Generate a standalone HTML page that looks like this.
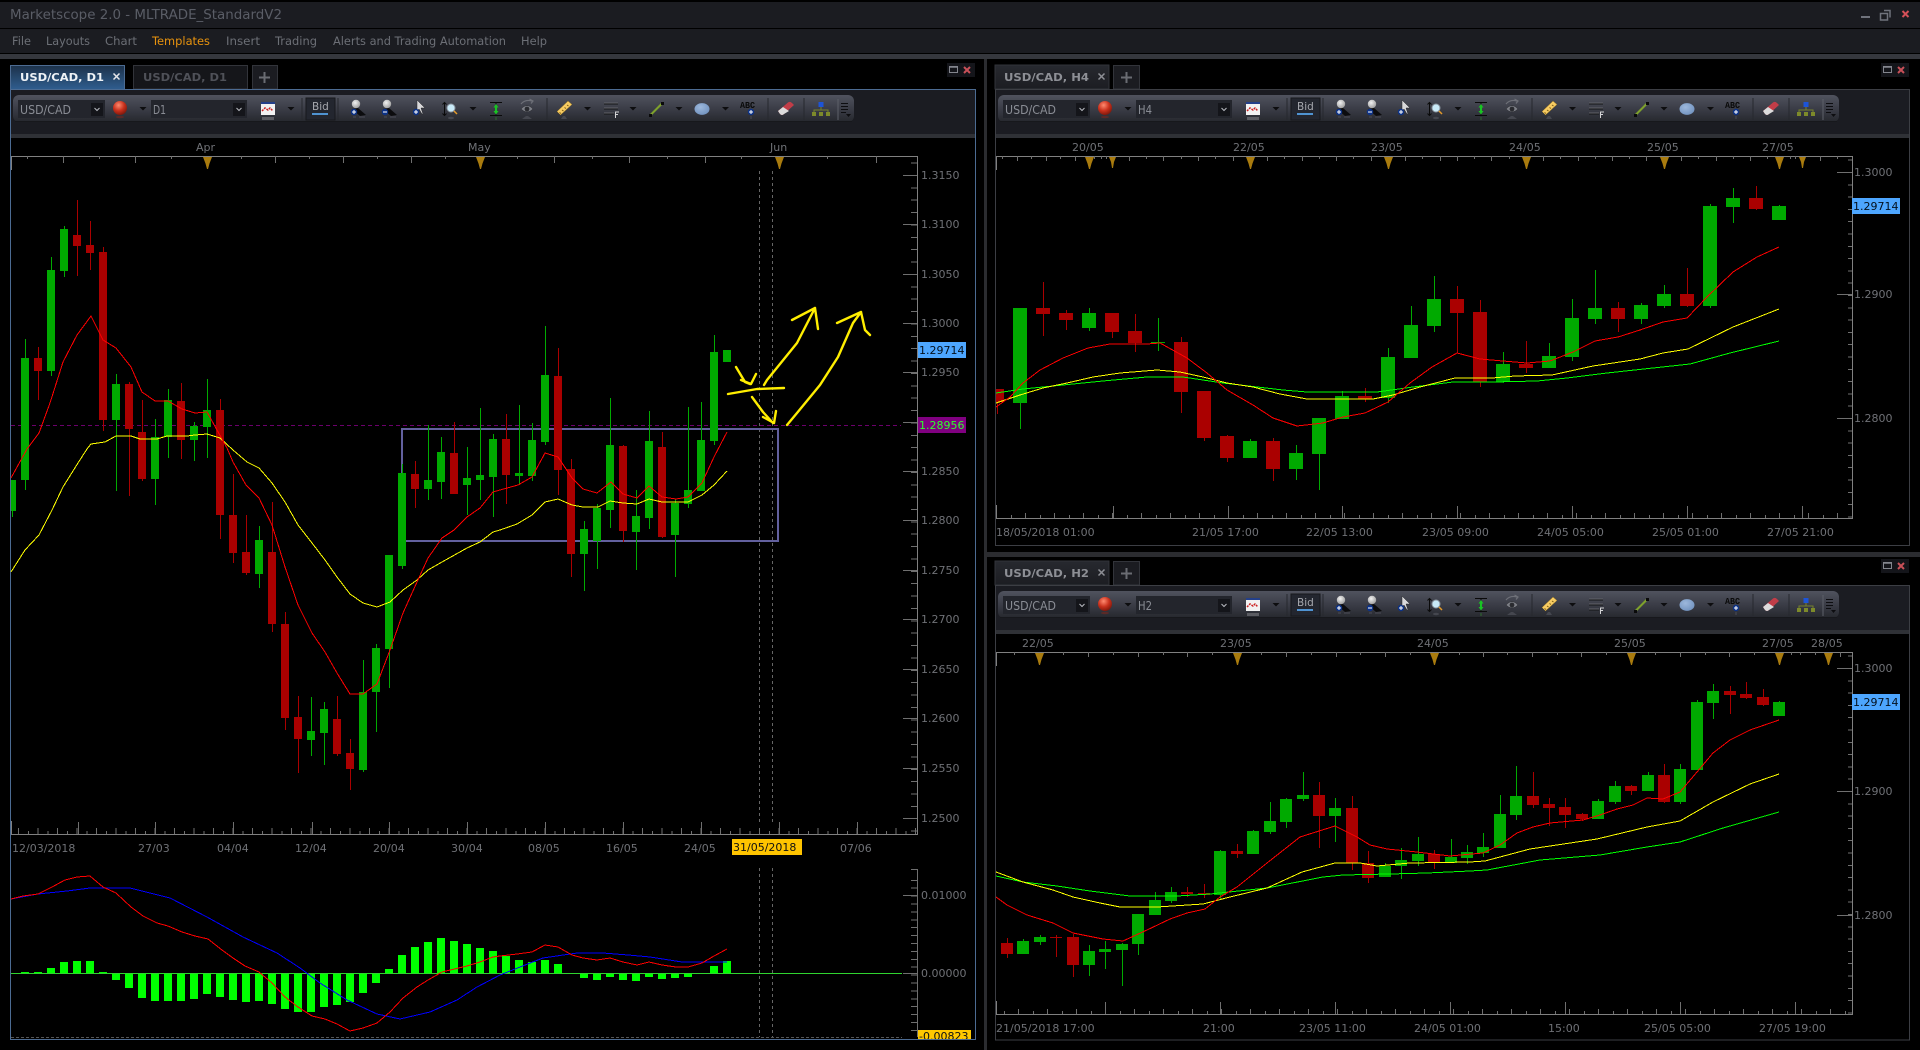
<!DOCTYPE html>
<html lang="en"><head><meta charset="utf-8"><title>Marketscope 2.0 - MLTRADE_StandardV2</title>
<style>
html,body{margin:0;padding:0;background:#000;width:1920px;height:1050px;overflow:hidden}
svg{display:block}
text{font-family:"DejaVu Sans","Liberation Sans",sans-serif;font-size:11px;fill:#6f7176}
.m{font-size:11.5px;fill:#6c6f76}
.tb{font-weight:bold;font-size:11px}
.sel{font-size:12.5px;fill:#8a8d95}
.abc{fill:#0a0a0a;font-size:9px;font-weight:bold;font-family:"Liberation Mono",monospace}
.crisp path,.crisp polyline,.crisp rect{shape-rendering:crispEdges}
.ma{fill:none;stroke-width:1;shape-rendering:crispEdges}
.gb{fill:none;stroke:#00aa00}.rb{fill:none;stroke:#aa0000}
.ax{fill:none;stroke:#808080;stroke-width:1;shape-rendering:crispEdges}
.tk{fill:none;stroke:#6f6f6f;shape-rendering:crispEdges}
.an{fill:none;stroke:#ffee00;stroke-width:2.4;stroke-linecap:round;stroke-linejoin:round}
</style></head>
<body>
<svg width="1920" height="1050" viewBox="0 0 1920 1050" xmlns="http://www.w3.org/2000/svg">
<defs>
<linearGradient id="tbg" x1="0" y1="0" x2="0" y2="1"><stop offset="0" stop-color="#50535e"/><stop offset=".5" stop-color="#3b3d47"/><stop offset="1" stop-color="#26282e"/></linearGradient>
<linearGradient id="tabA" x1="0" y1="0" x2="0" y2="1"><stop offset="0" stop-color="#1c3048"/><stop offset="1" stop-color="#2f5d8e"/></linearGradient>
<linearGradient id="tabI" x1="0" y1="0" x2="0" y2="1"><stop offset="0" stop-color="#27292f"/><stop offset="1" stop-color="#1c1d22"/></linearGradient>
<radialGradient id="ball" cx=".4" cy=".3" r=".8"><stop offset="0" stop-color="#ff8a70"/><stop offset=".5" stop-color="#c8301c"/><stop offset="1" stop-color="#6a1208"/></radialGradient>
<radialGradient id="gball" cx=".4" cy=".35" r=".8"><stop offset="0" stop-color="#f2f2f2"/><stop offset="1" stop-color="#8e8e8e"/></radialGradient>
<radialGradient id="bball" cx=".4" cy=".35" r=".8"><stop offset="0" stop-color="#9db8dc"/><stop offset="1" stop-color="#6b8dbb"/></radialGradient>
<path id="tri" d="M-4.5 0H4.5L2 6.5L.5 12H-.5L-2 6.5Z" fill="#a97b0e"/>
<path id="dn" d="M-3.5 0H3.5L0 3.5Z" fill="#0d0d0f"/>
<g id="toolbar">
<rect x="13" y="95" width="841" height="27" rx="6" fill="url(#tbg)"/>
<path d="M15 121.500H852" stroke="#17181c" stroke-width="1"/>
<rect x="18" y="100" width="87" height="18" fill="#23252c"/>
<rect x="91" y="103" width="12" height="13" fill="#14151a"/>
<path d="M94.500 108l2.500 2.500 2.500-2.500" fill="none" stroke="#b8bac0"/>
<circle cx="120" cy="108" r="7" fill="url(#ball)"/>
<ellipse cx="120" cy="117" rx="4" ry="1.300" fill="#5a2a28"/>
<use href="#dn" x="143" y="107"/>
<rect x="151" y="100" width="96" height="18" fill="#23252c"/>
<rect x="233" y="103" width="12" height="13" fill="#14151a"/>
<path d="M236.500 108l2.500 2.500 2.500-2.500" fill="none" stroke="#b8bac0"/>
<rect x="261" y="102" width="14" height="13" fill="#f2f2f2"/><rect x="261" y="102" width="14" height="2" fill="#24408a"/>
<path d="M262 111l3-3 3 2 2-2 3 3" fill="none" stroke="#c22" stroke-width="1.500" stroke-dasharray="2 1"/>
<rect x="262" y="117" width="12" height="3" fill="#5b5c62"/>
<use href="#dn" x="291" y="107"/>
<path d="M302 98V120M338 98V120M547 98V120M768 98V120M804 98V120" stroke="#26282e"/>
<rect x="306" y="98" width="29" height="22" fill="#23262f" stroke="#17181c"/>
<rect x="312" y="113" width="16" height="2" fill="#4f93d2"/>
<circle cx="356" cy="104" r="4.200" fill="url(#gball)"/><path d="M352 109L358 108L366 115L360 116Z" fill="#0c0c0e"/>
<circle cx="354" cy="112" r="3.200" fill="#0c3287"/><path d="M352 112h4M354 110v4" stroke="#fff"/>
<path d="M353 117h3M359 117h6" stroke="#4b4c55"/>
<circle cx="387" cy="104" r="4.200" fill="url(#gball)"/><path d="M383 109L389 108L397 115L391 116Z" fill="#0c0c0e"/>
<circle cx="385" cy="112" r="3.200" fill="#0c3287"/><path d="M383 112h4" stroke="#fff"/>
<path d="M384 117h3M390 117h6" stroke="#4b4c55"/>
<path d="M417 100V111L419 109L422 114H423L421 108H425Z" fill="#d8d8da" stroke="#26272c" stroke-width=".5"/>
<circle cx="416" cy="112" r="3.200" fill="#0c3287"/><path d="M414 112h4M416 110v4" stroke="#fff"/>
<path d="M444.500 103V115M442.500 104.500L444.500 102.500L446.500 104.500M442.500 113.500L444.500 115.500L446.500 113.500" fill="none" stroke="#0a0a0a"/>
<circle cx="451" cy="108" r="4" fill="#c9eaf8" stroke="#8c97a2"/><path d="M454 111L457 114" stroke="#e49a2a" stroke-width="1.500"/>
<ellipse cx="451" cy="118" rx="3" ry="1.200" fill="#45474f"/>
<use href="#dn" x="473" y="107"/>
<path d="M490 102.500H502M490 115.500H502M496 103V115" stroke="#0a0a0a"/>
<path d="M496 104L498.500 107.500H497V111H498.500L496 114.500L493.500 111H495V107.500H493.500Z" fill="#19c423"/>
<path d="M496 117v3" stroke="#2d6b2d"/>
<path d="M521 109Q527 102 533 109Q527 115 521 109Z" fill="#7e8088" stroke="#26272c" stroke-width=".5"/><circle cx="527" cy="109" r="2.400" fill="#2a2b30"/>
<path d="M521 104Q525 99 532 101M529.500 99L533 101L531 103.500" fill="none" stroke="#6e7078" stroke-width="1.200"/>
<path d="M522 119L526 116H528L532 119Z" fill="#45474f"/>
<path d="M557 111.500L568 101L572 104.500L560.500 115Z" fill="#f7cb62" stroke="#8c6e22" stroke-width=".5"/>
<path d="M559.500 112.500l1.500 1M562 110l1.500 1M564.500 107.500l1.500 1M567 105l1.500 1" stroke="#7a5c12"/>
<path d="M561 119L563 116H565L567 119Z" fill="#45474f"/>
<use href="#dn" x="587.500" y="107"/>
<path d="M604 103.500H618M604 108.500H618M604 113.500H614" stroke="#141416" stroke-width="2"/>
<path d="M604 103H618M604 108H618M604 113H614" stroke="#7c7e86" stroke-width=".8"/>
<path d="M615.500 118V112H619M615.500 114.500H618" stroke="#d4d4d6" fill="none"/>
<use href="#dn" x="633" y="107"/>
<path d="M650.500 115L662 103.500" stroke="#7ea12c" stroke-width="2"/><rect x="649" y="114" width="3" height="3" fill="#0a0a0a"/><rect x="661" y="102" width="3" height="3" fill="#0a0a0a"/>
<use href="#dn" x="679" y="107"/>
<ellipse cx="702" cy="109" rx="7.500" ry="5.900" fill="url(#bball)"/>
<use href="#dn" x="725.500" y="107"/>
<circle cx="751" cy="112" r="3.200" fill="#0c3287"/><path d="M749 112h4M751 110v4" stroke="#fff"/>
<path d="M751 116v3" stroke="#4b4c55"/>
<path d="M778 111L788 102.500Q790 101 792 103L794 105L784 114Q782 116 780 114Z" fill="#c13d48"/><path d="M778 111L783 107L789 111L784 114Q782 116 780 114Z" fill="#dcdcdc"/>
<rect x="818.500" y="102" width="5" height="5" fill="#1d54d8"/>
<path d="M821 107V110M814 112V110H828V112" fill="none" stroke="#77822c"/>
<rect x="812" y="112" width="4" height="4" fill="#7d8a2a"/><rect x="819" y="112" width="4" height="4" fill="#7d8a2a"/><rect x="826" y="112" width="4" height="4" fill="#7d8a2a"/>
<path d="M838 99V120" stroke="#5d6069"/>
<path d="M841 103.500H848M841 106.500H848M841 109.500H848M841 112.500H846" stroke="#0d0d10"/>
<path d="M846 114H851L848.500 117Z" fill="#0d0d10"/>
</g>
<g id="wc">
<rect x="-7" y="-7" width="28" height="14" fill="#14151a"/>
<rect x="-4.500" y="-3.500" width="8" height="6" fill="none" stroke="#84868e"/><path d="M-4.500 -3H4" stroke="#84868e" stroke-width="1.500"/>
<path d="M10 -3L16 3M16 -3L10 3" stroke="#c85058" stroke-width="2"/>
</g>
</defs>

<rect width="1920" height="1050" fill="#000"/>
<rect y="2" width="1920" height="26" fill="#1b1c21"/>
<rect y="29" width="1920" height="24" fill="#1b1c21"/>
<rect y="54" width="1920" height="5" fill="#35373d"/>
<text x="10" y="19" class="m" style="font-size:13px;fill:#5a5d66" textLength="272" lengthAdjust="spacingAndGlyphs">Marketscope 2.0 - MLTRADE_StandardV2</text>
<text x="12" y="45" class="m" textLength="19" lengthAdjust="spacingAndGlyphs">File</text>
<text x="46" y="45" class="m" textLength="44" lengthAdjust="spacingAndGlyphs">Layouts</text>
<text x="105" y="45" class="m" textLength="32" lengthAdjust="spacingAndGlyphs">Chart</text>
<text x="152" y="45" class="m" style="fill:#e8930e" textLength="58" lengthAdjust="spacingAndGlyphs">Templates</text>
<text x="226" y="45" class="m" textLength="34" lengthAdjust="spacingAndGlyphs">Insert</text>
<text x="275" y="45" class="m" textLength="42" lengthAdjust="spacingAndGlyphs">Trading</text>
<text x="333" y="45" class="m" textLength="173" lengthAdjust="spacingAndGlyphs">Alerts and Trading Automation</text>
<text x="521" y="45" class="m" textLength="26" lengthAdjust="spacingAndGlyphs">Help</text>
<path d="M1861 16h9v2h-9z" fill="#70737c"/>
<path d="M1884 10.500h6v7M1880.500 13.500h7v6.500h-7z" fill="none" stroke="#70737c" stroke-width="1.500"/>
<path d="M1902.500 11L1908.500 17M1908.500 11L1902.500 17" stroke="#d55058" stroke-width="2"/>
<rect x="984" y="59" width="3" height="991" fill="#2b2c30"/>
<rect x="987" y="552" width="933" height="5" fill="#2b2c30"/>

<!-- LEFT panel frame and tabs -->
<rect x="10" y="65" width="115" height="24" fill="url(#tabA)"/><path d="M10.500 89V65.500H124.500V89" fill="none" stroke="#4c6b92"/>
<text x="20" y="81" class="tb" style="fill:#eef2f6" textLength="84" lengthAdjust="spacingAndGlyphs">USD/CAD, D1</text>
<path d="M113.500 73.500L119.500 79.500M119.500 73.500L113.500 79.500" stroke="#e6e6ea" stroke-width="1.500"/>
<rect x="133.500" y="65.500" width="114" height="23.500" fill="#15161a" stroke="#32343a"/>
<text x="143" y="81" class="tb" style="fill:#4f5158" textLength="84" lengthAdjust="spacingAndGlyphs">USD/CAD, D1</text>
<rect x="252.500" y="65.500" width="25" height="23.500" fill="#1b1c21" stroke="#32343a"/>
<path d="M259 77.500h11M264.500 72v11" stroke="#6a6c72" stroke-width="2"/>
<rect x="10.500" y="89.500" width="965" height="950" fill="#000" stroke="#4c6b92"/>
<rect x="11" y="90" width="964" height="44" fill="#1b1c22"/><rect x="11" y="134" width="964" height="4" fill="#2f3136"/>
<use href="#wc" x="954" y="70"/>
<use href="#toolbar"/>
<text x="20" y="114" class="sel" textLength="51" lengthAdjust="spacingAndGlyphs">USD/CAD</text>
<text x="153" y="114" class="sel" textLength="13" lengthAdjust="spacingAndGlyphs">D1</text>
<text x="312" y="110" style="fill:#a6a8ae;font-size:10.500px">Bid</text>
<text x="740" y="108" class="abc" textLength="15" lengthAdjust="spacingAndGlyphs">ABC</text>

<!-- RIGHT panel 2 -->
<rect x="995" y="65" width="114" height="24" fill="url(#tabI)" stroke="#32343a"/>
<text x="1004" y="81" class="tb" style="fill:#8d8f95" textLength="85" lengthAdjust="spacingAndGlyphs">USD/CAD, H4</text>
<path d="M1098.500 73.500L1104.500 79.500M1104.500 73.500L1098.500 79.500" stroke="#8d8f95" stroke-width="1.500"/>
<rect x="1113.500" y="65.500" width="26" height="23.500" fill="#1b1c21" stroke="#32343a"/>
<path d="M1121 77.500h11M1126.500 72v11" stroke="#6a6c72" stroke-width="2"/>
<rect x="995.500" y="89.500" width="914" height="456" fill="#000" stroke="#3c3e44"/>
<rect x="996" y="90" width="913" height="44" fill="#1b1c22"/><rect x="996" y="134" width="913" height="4" fill="#2f3136"/>
<use href="#wc" x="1888" y="70"/>
<use href="#toolbar" x="985"/>
<text x="1005" y="114" class="sel" textLength="51" lengthAdjust="spacingAndGlyphs">USD/CAD</text>
<text x="1138" y="114" class="sel" textLength="14" lengthAdjust="spacingAndGlyphs">H4</text>
<text x="1297" y="110" style="fill:#a6a8ae;font-size:10.500px">Bid</text>
<text x="1725" y="108" class="abc" textLength="15" lengthAdjust="spacingAndGlyphs">ABC</text>

<!-- RIGHT panel 3 -->
<rect x="995" y="561" width="114" height="24" fill="url(#tabI)" stroke="#32343a"/>
<text x="1004" y="577" class="tb" style="fill:#8d8f95" textLength="85" lengthAdjust="spacingAndGlyphs">USD/CAD, H2</text>
<path d="M1098.500 569.500L1104.500 575.500M1104.500 569.500L1098.500 575.500" stroke="#8d8f95" stroke-width="1.500"/>
<rect x="1113.500" y="561.500" width="26" height="23.500" fill="#1b1c21" stroke="#32343a"/>
<path d="M1121 573.500h11M1126.500 568v11" stroke="#6a6c72" stroke-width="2"/>
<rect x="995.500" y="585.500" width="914" height="454.500" fill="#000" stroke="#3c3e44"/>
<rect x="996" y="586" width="913" height="44" fill="#1b1c22"/><rect x="996" y="630" width="913" height="4" fill="#2f3136"/>
<use href="#wc" x="1888" y="566"/>
<use href="#toolbar" x="985" y="496"/>
<text x="1005" y="610" class="sel" textLength="51" lengthAdjust="spacingAndGlyphs">USD/CAD</text>
<text x="1138" y="610" class="sel" textLength="14" lengthAdjust="spacingAndGlyphs">H2</text>
<text x="1297" y="606" style="fill:#a6a8ae;font-size:10.500px">Bid</text>
<text x="1725" y="604" class="abc" textLength="15" lengthAdjust="spacingAndGlyphs">ABC</text>

<!-- MAIN CHART -->
<g>
<path class="ax" d="M11.500 170V156.500H917.500V834.500H11.500V821"/>
<path class="tk" stroke-width="1" d="M27.500 156v3M63.500 156v7M99.500 156v3M135.500 156v7M171.500 156v3M241.500 156v3M275.500 156v7M309.500 156v3M343.500 156v7M377.500 156v3M411.500 156v7M445.500 156v3M517.500 156v3M554.500 156v7M592.500 156v3M629.500 156v7M667.500 156v3M705.500 156v7M741.500 156v3M827.500 156v3M876.500 156v7"/>
<use href="#tri" x="207.500" y="157"/><use href="#tri" x="480.500" y="157"/><use href="#tri" x="779.500" y="157"/>
<text x="196" y="151">Apr</text><text x="468" y="151">May</text><text x="770" y="151">Jun</text>
<path class="tk" stroke-width="1" d="M78.500 822V834M155.500 822V834M233.500 822V834M312.500 822V834M389.500 822V834M467.500 822V834M545.500 822V834M623.500 822V834M701.500 822V834M779.500 822V834M857.500 822V834"/>
<path class="tk" stroke-width="6" stroke-dasharray="1 18.500" d="M18 831H917"/>
<path class="tk" stroke-width="3" stroke-dasharray="1 18.500" d="M28 832.500H917"/>
<path class="tk" stroke-width="6" stroke-dasharray="1 11.370" d="M914 162.630V834"/>
<path class="tk" stroke-width="1" d="M903 175.500H917M903 224.500H917M903 274.500H917M903 323.500H917M903 372.500H917M903 422.500H917M903 471.500H917M903 520.500H917M903 570.500H917M903 619.500H917M903 669.500H917M903 718.500H917M903 768.500H917M903 818.500H917"/>
<text x="921" y="179">1.3150</text><text x="921" y="228">1.3100</text><text x="921" y="278">1.3050</text><text x="921" y="327">1.3000</text><text x="921" y="376">1.2950</text><text x="921" y="475">1.2850</text><text x="921" y="524">1.2800</text><text x="921" y="574">1.2750</text><text x="921" y="623">1.2700</text><text x="921" y="673">1.2650</text><text x="921" y="722">1.2600</text><text x="921" y="772">1.2550</text><text x="921" y="822">1.2500</text>
<path d="M11 425.500H901" stroke="#6c006c" stroke-dasharray="4 3" shape-rendering="crispEdges"/>
<path d="M759.500 171V822M772.500 171V822M759.500 868V1037M772.500 868V1037" stroke="#666" stroke-dasharray="3 3" shape-rendering="crispEdges"/>
<rect x="402" y="429" width="376" height="112" fill="none" stroke="#62609e" stroke-width="2" shape-rendering="crispEdges"/>
<path class="gb" stroke-width="1" shape-rendering="crispEdges" d="M12.500 480V517M25.500 339V490M51.500 257V376M64.500 226V277M116.500 374V491M155.500 419V505M168.500 389V458M194.500 422V461M207.500 379V458M259.500 526V588M311.500 697V756M324.500 702V765M363.500 660V772M376.500 644V732M389.500 555V688M402.500 464V569M428.500 425V500M441.500 437V499M467.500 447V515M480.500 408V500M493.500 434V517M519.500 405V485M532.500 423V481M545.500 326V445M584.500 521V591M597.500 504V569M610.500 398V528M636.500 490V570M649.500 411V529M675.500 499V577M688.500 407V508M701.500 402V491M714.500 335V445"/>
<path class="rb" stroke-width="1" shape-rendering="crispEdges" d="M38.500 347V400M77.500 200V276M90.500 221V270M103.500 247V431M129.500 382V496M142.500 400V481M181.500 383V459M220.500 399V539M233.500 474V563M246.500 515V575M272.500 502V632M285.500 612V730M298.500 696V773M337.500 696V756M350.500 739V790M415.500 461V508M454.500 422V494M506.500 414V504M558.500 348V495M571.500 459V577M623.500 445V542M662.500 432V538"/>
<path class="gb" stroke-width="5" shape-rendering="crispEdges" d="M13.500 480V511"/>
<path class="gb" stroke-width="8" shape-rendering="crispEdges" d="M25 358V480M51 270V371M64 229V271M116 384V420M155 437V479M168 400V437M194 426V440M207 410V427M259 540V574M311 731V740M324 709V733M363 692V770M376 648V692M389 555V649M402 473V566M428 480V489M441 452V482M467 478V485M480 475V480M493 439V477M519 473V476M532 440V476M545 375V442M584 529V554M597 508V541M610 445V510M636 516V532M649 441V518M675 503V535M688 490V504M701 440V491M714 352V441M727 350V362"/>
<path class="rb" stroke-width="8" shape-rendering="crispEdges" d="M38 358V371M77 235V246M90 245V253M103 252V420M129 384V429M142 432V479M181 401V440M220 410V515M233 515V553M246 552V573M272 552V624M285 624V718M298 717V739M337 719V754M350 753V769M415 474V489M454 453V494M506 439V475M558 376V470M571 469V554M623 446V531M662 447V537"/>
<polyline class="ma" stroke="#ffff00" points="11,572 25,550 39,535 52,510 63,487 78,463 87,449 91,444 105,442 116,436 131,436 140,439 157,439 167,436 187,436 195,435 207,434 220,438 233,450 247,462 259,468 272,483 285,502 298,525 312,543 325,560 337,577 350,594 363,603 377,607 390,602 403,590 417,580 428,570 442,562 467,548 480,542 493,532 500,530 517,524 532,515 545,502 558,499 572,505 583,507 598,507 610,501 623,503 637,504 649,499 662,502 676,502 688,502 702,495 714,485 727,471"/>
<polyline class="ma" stroke="#ff0000" points="11,478 27,449 39,433 50,403 63,362 77,335 91,316 103,340 116,348 131,367 142,392 155,401 168,401 182,409 195,413 207,412 217,430 227,448 233,462 246,485 259,498 272,525 285,567 298,605 312,633 325,652 337,673 350,694 363,694 377,684 390,650 403,613 417,582 428,558 442,538 454,530 467,517 480,508 493,492 500,490 518,485 532,477 545,453 558,457 572,478 583,489 597,493 611,482 623,494 637,498 649,486 662,497 676,499 688,497 702,483 714,457 727,432"/>
<path class="an" d="M736 367L745 382L750 384M741 380L751 384L756 374"/>
<path class="an" d="M728 394L757 389L784 388" stroke-width="3"/>
<path class="an" d="M752 397L763 412L773 423M763 417L774 423L776 411"/>
<path class="an" d="M764 385L767 380L797 343L815 308M792 320L815 308L818 329"/>
<path class="an" d="M787 425L797 413L820 385L838 357L853 323L861 312M837 323L861 312L865 330L870 335"/>
<rect x="918" y="342" width="48" height="16" fill="#4da6ff"/><text x="919" y="354" style="fill:#04101c">1.29714</text>
<rect x="918" y="417" width="48" height="16" fill="#800080"/><text x="919" y="429" style="fill:#2cff2c">1.28956</text>
<text x="12" y="852">12/03/2018</text><text x="138" y="852">27/03</text><text x="217" y="852">04/04</text><text x="295" y="852">12/04</text><text x="373" y="852">20/04</text><text x="451" y="852">30/04</text><text x="528" y="852">08/05</text><text x="606" y="852">16/05</text><text x="684" y="852">24/05</text><text x="840" y="852">07/06</text>
<rect x="732" y="839" width="70" height="16" fill="#ffc400"/><text x="733" y="851" style="fill:#111">31/05/2018</text>
<path class="tk" stroke-width="1" d="M917.500 869V1037M903 895.500H917M903 973.500H917"/>
<path class="tk" stroke-width="1" d="M911 869.500h6"/>
<path class="tk" stroke-width="6" stroke-dasharray="1 6.900" d="M914 879.800V1037"/>
<text x="921" y="899">0.01000</text><text x="921" y="977">0.00000</text>
<path d="M11 1037.500H902" stroke="#555" stroke-dasharray="3 2" shape-rendering="crispEdges"/>
<path fill="none" stroke="#00ff00" stroke-width="8" shape-rendering="crispEdges" d="M25 972V974M38 972V974M51 968V974M64 962V974M77 961V974M90 961V974M103 972V974M116 973V980M129 973V988M142 973V998M155 973V1001M168 973V1001M181 973V1001M194 973V999M207 973V994M220 973V997M233 973V1000M246 973V1002M259 973V1001M272 973V1004M285 973V1009M298 973V1012M311 973V1012M324 973V1007M337 973V1005M350 973V1002M363 973V993M376 973V983M389 969V974M402 955V974M415 947V974M428 942V974M441 938V974M454 941V974M467 944V974M480 948V974M493 951V974M506 956V974M519 960V974M532 962V974M545 960V974M558 964V974M584 973V978M597 973V980M610 973V977M623 973V980M636 973V981M649 973V977M662 973V979M675 973V978M688 973V977M714 966V974M727 961V974"/>
<path d="M11 973.500H902" stroke="#2fd42f" shape-rendering="crispEdges"/>
<polyline class="ma" stroke="#0000ff" points="11,899 38,894 67,891 90,888 130,888 170,898 207,917 243,937 277,953 300,968 320,983 347,1000 377,1014 400,1019 430,1012 457,1000 477,987 500,975 520,967 543,958 577,953 603,953 628,955 650,957 682,962 727,962"/>
<polyline class="ma" stroke="#ff0000" points="11,899 23,896 38,894 52,887 65,880 77,877 90,876 103,887 116,893 131,907 143,916 157,923 168,926 182,932 195,936 208,939 222,950 233,958 245,966 259,972 272,983 285,997 298,1007 312,1016 325,1019 337,1024 350,1031 363,1028 377,1023 390,1012 403,998 417,987 428,980 442,972 467,966 480,962 493,957 500,956 517,954 532,952 545,945 558,947 572,955 583,958 597,960 610,958 623,962 637,965 649,962 662,965 676,967 688,967 702,963 714,956 727,949"/>
<svg x="918" y="1030" width="53" height="9" overflow="hidden"><rect width="53" height="9" fill="#ffc800"/><text x="1" y="10" style="fill:#111">-0.00823</text></svg>
</g>

<!-- PANEL 2 CHART -->
<g>
<path class="ax" d="M996.500 170V156.500H1852.500V518.500H996.500V505"/>
<path class="tk" stroke-width="1" d="M1002.500 156v3M1017.500 156v5M1031.500 156v3M1046.500 156v5M1060.500 156v3M1075.500 156v5M1094.500 156v3M1101.500 156v3M1106.500 156v3M1129.500 156v5M1146.500 156v3M1163.500 156v5M1181.500 156v3M1198.500 156v5M1215.500 156v3M1233.500 156v5M1267.500 156v5M1284.500 156v3M1302.500 156v5M1319.500 156v3M1336.500 156v5M1353.500 156v3M1371.500 156v5M1405.500 156v5M1422.500 156v3M1440.500 156v5M1457.500 156v5M1474.500 156v3M1491.500 156v5M1509.500 156v3M1543.500 156v5M1560.500 156v3M1578.500 156v5M1595.500 156v3M1612.500 156v5M1629.500 156v3M1646.500 156v5M1681.500 156v5M1698.500 156v3M1716.500 156v5M1733.500 156v3M1750.500 156v5M1767.500 156v3M1790.500 156v3M1795.500 156v3M1820.500 156v5M1837.500 156v3"/>
<use href="#tri" x="1089.500" y="157"/>
<path d="M1109 157H1116L1114 162L1113 168H1112L1111 162Z" fill="#a97b0e"/>
<use href="#tri" x="1250.500" y="157"/><use href="#tri" x="1388.500" y="157"/><use href="#tri" x="1526.500" y="157"/><use href="#tri" x="1664.500" y="157"/><use href="#tri" x="1779.500" y="157"/>
<path d="M1799 157H1806L1804 162L1803 168H1802L1801 162Z" fill="#a97b0e"/>
<text x="1072" y="151">20/05</text><text x="1233" y="151">22/05</text><text x="1371" y="151">23/05</text><text x="1509" y="151">24/05</text><text x="1647" y="151">25/05</text><text x="1762" y="151">27/05</text>
<path class="tk" stroke-width="1" d="M1113.500 506V518M1228.500 506V518M1342.500 506V518M1457.500 506V518M1572.500 506V518M1687.500 506V518M1802.500 506V518"/>
<path class="tk" stroke-width="5" stroke-dasharray="1 28" d="M1025 515.500H1852"/>
<path class="tk" stroke-width="3" stroke-dasharray="1 28" d="M1011 516.500H1852"/>
<path class="tk" stroke-width="4" stroke-dasharray="1 11.300" d="M1850 159.700V518"/>
<path class="tk" stroke-width="1" d="M1837 172.500H1852M1837 294.500H1852M1837 418.500H1852"/>
<text x="1854" y="176">1.3000</text><text x="1854" y="298">1.2900</text><text x="1854" y="422">1.2800</text>
<text x="996" y="536">18/05/2018 01:00</text><text x="1192" y="536">21/05 17:00</text><text x="1306" y="536">22/05 13:00</text><text x="1422" y="536">23/05 09:00</text><text x="1537" y="536">24/05 05:00</text><text x="1652" y="536">25/05 01:00</text><text x="1767" y="536">27/05 21:00</text>
<path class="gb" stroke-width="1" shape-rendering="crispEdges" d="M1020.500 308V429M1089.500 308V331M1158.500 318V351M1250.500 439V458M1296.500 445V480M1319.500 418V490M1342.500 391V419M1388.500 348V403M1411.500 306V358M1434.500 276V332M1503.500 352V383M1549.500 343V368M1572.500 299V361M1595.500 270V324M1641.500 303V324M1664.500 285V308M1710.500 204V308M1733.500 188V223M1779.500 205V220"/>
<path class="rb" stroke-width="1" shape-rendering="crispEdges" d="M997.500 402V414M1043.500 282V336M1066.500 310V330M1112.500 313V338M1135.500 314V352M1181.500 337V413M1204.500 391V441M1227.500 435V462M1273.500 438V481M1365.500 388V402M1457.500 286V353M1480.500 300V387M1526.500 341V373M1618.500 302V332M1687.500 268V307M1756.500 186V210"/>
<path class="rb" stroke-width="8" shape-rendering="crispEdges" d="M1000 389V402"/>
<path class="gb" stroke-width="14" shape-rendering="crispEdges" d="M1020 308V403M1089 313V328M1158 342V343M1250 441V458M1296 453V469M1319 418V454M1342 396V419M1388 357V398M1411 325V358M1434 299V326M1503 364V382M1549 356V368M1572 318V357M1595 308V319M1641 305V319M1664 294V306M1710 206V306M1733 198V207M1779 206V220"/>
<path class="rb" stroke-width="14" shape-rendering="crispEdges" d="M1043 308V314M1066 313V320M1112 313V332M1135 331V343M1181 342V392M1204 391V438M1227 436V458M1273 441V469M1365 396V399M1457 299V313M1480 312V382M1526 364V368M1618 308V319M1687 294V306M1756 198V209"/>
<polyline class="ma" stroke="#00ff00" points="996,393 1023,389 1063,385 1103,381 1147,377 1183,377 1223,383 1283,390 1307,392 1377,392 1413,387 1453,382 1492,382 1537,381 1567,378 1607,373 1653,368 1690,364 1730,353 1779,341"/>
<polyline class="ma" stroke="#ffff00" points="996,403 1020,395 1043,388 1067,383 1093,377 1120,373 1157,370 1180,372 1203,377 1227,383 1253,387 1280,394 1307,399 1373,399 1393,395 1420,387 1455,378 1492,378 1515,376 1552,375 1593,366 1640,359 1663,353 1688,349 1733,327 1779,309"/>
<polyline class="ma" stroke="#ff0000" points="996,407 1010,397 1023,383 1040,370 1063,358 1088,348 1110,344 1147,344 1160,343 1187,358 1207,373 1227,390 1253,405 1273,418 1297,426 1323,423 1343,417 1365,413 1388,402 1410,383 1432,367 1457,353 1480,359 1503,361 1527,363 1550,361 1573,352 1595,341 1618,337 1640,330 1663,322 1687,318 1707,297 1733,272 1757,257 1779,247"/>
<rect x="1852" y="198" width="48" height="16" fill="#4da6ff"/><text x="1853" y="210" style="fill:#04101c">1.29714</text>
</g>

<!-- PANEL 3 CHART -->
<g>
<path class="ax" d="M996.500 666V652.500H1852.500V1014.500H996.500V1001"/>
<path class="tk" stroke-width="1" d="M1014.500 652v3M1063.500 652v3M1088.500 652v5M1113.500 652v3M1138.500 652v5M1163.500 652v3M1187.500 652v5M1212.500 652v3M1261.500 652v3M1286.500 652v5M1311.500 652v3M1336.500 652v5M1360.500 652v3M1385.500 652v5M1410.500 652v3M1459.500 652v3M1483.500 652v5M1507.500 652v3M1532.500 652v5M1557.500 652v3M1581.500 652v5M1606.500 652v3M1655.500 652v3M1680.500 652v5M1705.500 652v3M1729.500 652v5M1754.500 652v3M1791.500 652v3M1800.500 652v3M1815.500 652v3M1840.500 652v5"/>
<use href="#tri" x="1039.500" y="653"/><use href="#tri" x="1237.500" y="653"/><use href="#tri" x="1434.500" y="653"/><use href="#tri" x="1631.500" y="653"/><use href="#tri" x="1779.500" y="653"/><use href="#tri" x="1828.500" y="653"/>
<text x="1022" y="647">22/05</text><text x="1220" y="647">23/05</text><text x="1417" y="647">24/05</text><text x="1614" y="647">25/05</text><text x="1762" y="647">27/05</text><text x="1811" y="647">28/05</text>
<path class="tk" stroke-width="1" d="M1105.500 1002V1014M1220.500 1002V1014M1335.500 1002V1014M1450.500 1002V1014M1565.500 1002V1014M1680.500 1002V1014M1795.500 1002V1014"/>
<path class="tk" stroke-width="5" stroke-dasharray="1 28" d="M1018 1011.500H1852"/>
<path class="tk" stroke-width="3" stroke-dasharray="1 28" d="M1004 1012.500H1852"/>
<path class="tk" stroke-width="4" stroke-dasharray="1 11.300" d="M1850 655.700V1014"/>
<path class="tk" stroke-width="1" d="M1837 668.500H1852M1837 791.500H1852M1837 915.500H1852"/>
<text x="1854" y="672">1.3000</text><text x="1854" y="795">1.2900</text><text x="1854" y="919">1.2800</text>
<text x="996" y="1032">21/05/2018 17:00</text><text x="1203" y="1032">21:00</text><text x="1299" y="1032">23/05 11:00</text><text x="1414" y="1032">24/05 01:00</text><text x="1548" y="1032">15:00</text><text x="1644" y="1032">25/05 05:00</text><text x="1759" y="1032">27/05 19:00</text>
<path class="gb" stroke-width="1" shape-rendering="crispEdges" d="M1023.500 939V954M1040.500 935V945M1089.500 945V976M1105.500 941V969M1122.500 943V986M1138.500 914V955M1155.500 892V915M1171.500 887V903M1220.500 850V899M1253.500 830V854M1270.500 802V834M1286.500 798V828M1303.500 772V801M1335.500 798V842M1385.500 863V877M1401.500 848V879M1418.500 837V866M1451.500 839V863M1467.500 845V864M1483.500 833V857M1500.500 795V848M1516.500 766V820M1598.500 799V819M1615.500 781V804M1648.500 772V791M1680.500 764V804M1697.500 700V770M1713.500 684V719M1779.500 701V716"/>
<path class="rb" stroke-width="1" shape-rendering="crispEdges" d="M1007.500 938V958M1056.500 935V957M1073.500 934V977M1187.500 887V897M1204.500 884V898M1237.500 844V858M1319.500 782V848M1352.500 796V870M1368.500 851V883M1434.500 850V869M1533.500 772V808M1549.500 798V826M1565.500 798V828M1582.500 813V821M1631.500 785V795M1664.500 764V803M1730.500 686V714M1746.500 682V699M1763.500 689V706"/>
<path class="gb" stroke-width="12" shape-rendering="crispEdges" d="M1023 941V954M1040 937V942M1089 951V965M1105 949V952M1122 944V950M1138 914V944M1155 900V915M1171 892V901M1220 851V895M1253 831V854M1270 821V832M1286 799V822M1303 795V799M1335 808V816M1385 866V877M1401 860V866M1418 854V861M1451 857V863M1467 852V858M1483 847V853M1500 814V848M1516 796V815M1598 801V819M1615 786V802M1648 775V791M1680 769V802M1697 702V770M1713 691V703M1779 702V716"/>
<path class="rb" stroke-width="12" shape-rendering="crispEdges" d="M1007 943V954M1056 937V938M1073 937V965M1187 892V894M1204 893V895M1237 851V854M1319 795V816M1352 808V863M1368 863V878M1434 854V863M1533 796V805M1549 804V808M1565 807V815M1582 814V819M1631 786V791M1664 775V802M1730 691V695M1746 694V698M1763 697V705"/>
<polyline class="ma" stroke="#00ff00" points="996,876 1023,882 1057,886 1090,891 1130,896 1177,896 1210,894 1267,888 1323,877 1343,875 1390,874 1427,873 1470,871 1487,870 1540,860 1600,855 1647,847 1680,842 1723,828 1779,812"/>
<polyline class="ma" stroke="#ffff00" points="996,872 1023,882 1053,890 1073,897 1100,903 1120,907 1157,907 1203,904 1230,897 1267,888 1302,872 1335,863 1360,863 1377,866 1410,863 1470,862 1485,861 1530,849 1597,839 1647,827 1680,821 1713,802 1750,784 1779,774"/>
<polyline class="ma" stroke="#ff0000" points="996,897 1007,905 1027,915 1053,923 1073,933 1103,939 1123,941 1147,930 1170,919 1187,913 1205,909 1220,897 1237,887 1267,863 1300,837 1335,826 1357,837 1370,845 1387,849 1417,852 1450,856 1483,853 1500,845 1517,833 1533,827 1550,823 1583,820 1600,815 1617,809 1633,805 1647,798 1663,799 1680,792 1697,772 1713,753 1730,740 1750,730 1779,720"/>
<rect x="1852" y="694" width="48" height="16" fill="#4da6ff"/><text x="1853" y="706" style="fill:#04101c">1.29714</text>
</g>
</svg>
</body></html>
